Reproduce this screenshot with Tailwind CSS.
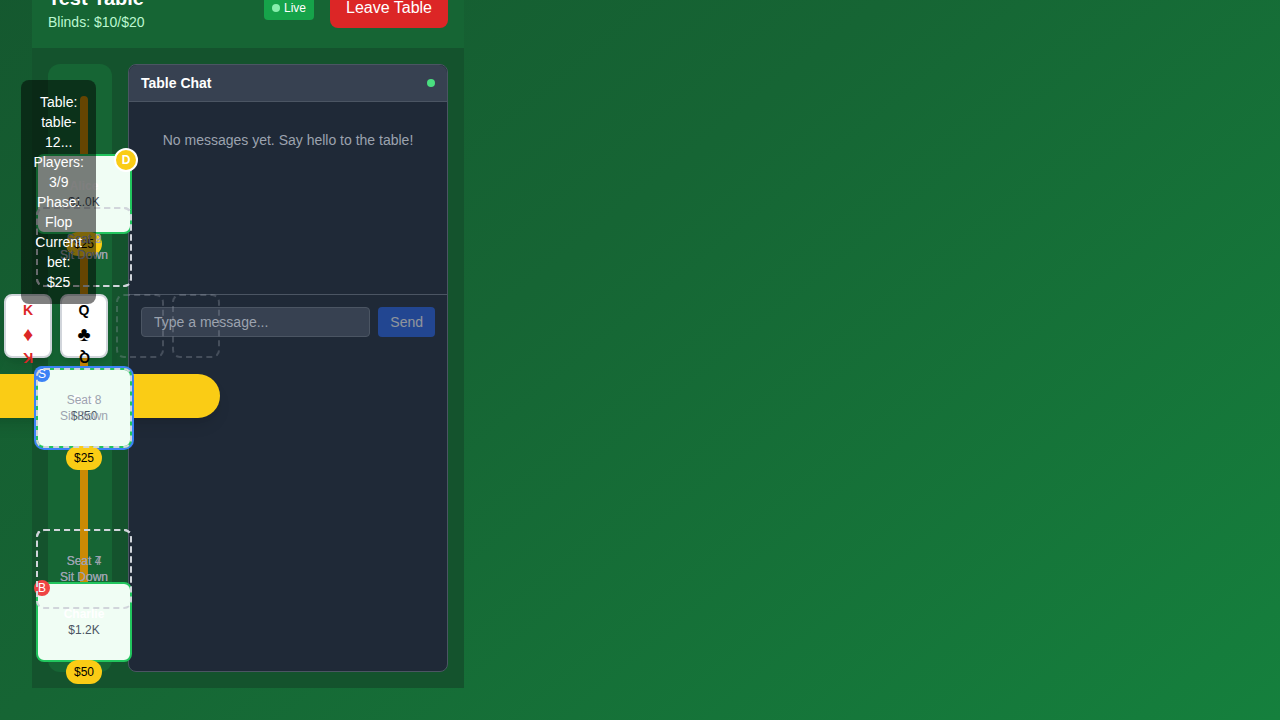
<!DOCTYPE html>
<html lang="en">
<head>
<meta charset="utf-8">
<meta name="viewport" content="width=device-width, initial-scale=1">
<title>Test Table</title>
<script src="https://cdn.jsdelivr.net/npm/@tailwindcss/browser@4"></script>
</head>
<body class="h-screen overflow-hidden font-['Liberation_Sans',Arial,sans-serif]">
<div class="h-full overflow-hidden">
<div class="-mt-80 px-8 pt-72 pb-8 [background-image:linear-gradient(to_bottom_right,#14532d,#166534,#15803d)]">
  <div class="w-fit bg-[#14532d]">
    <header class="flex items-center justify-between bg-[#166534] p-4">
      <div>
        <h1 class="text-xl font-bold text-white">Test Table</h1>
        <p class="text-sm text-[#bbf7d0]">Blinds: $10/$20</p>
      </div>
      <div class="flex items-center gap-4">
        <div class="flex items-center gap-1 rounded bg-[#16a34a] px-2 py-1 text-xs text-white">
          <span class="size-2 rounded-full bg-[#86efac]"></span>
          <span>Live</span>
        </div>
        <button type="button" class="rounded-lg bg-[#dc2626] px-4 py-2 text-white">Leave Table</button>
      </div>
    </header>

    <main class="flex gap-4 p-4">
      <section aria-label="Poker table" class="relative z-10 min-h-[608px] w-16 rounded-xl bg-[#166534]">
        <div class="absolute inset-8 rounded-full border-4 border-[#ca8a04]">

          <!-- Community cards and pot -->
          <div class="absolute top-1/2 left-1/2 flex w-[272px] -translate-x-1/2 -translate-y-1/2 flex-col gap-4 pb-6">
            <div class="flex gap-2">
              <div class="h-16 w-12 rounded-lg border-2 border-[#d1d5db] bg-white shadow-lg"></div>
              <div class="flex h-16 w-12 flex-col items-center rounded-lg border-2 border-[#d1d5db] bg-white p-1 font-bold text-[#dc2626] shadow-lg">
                <span class="text-sm">K</span>
                <span class="text-xl">♦</span>
                <span class="rotate-180 text-sm">K</span>
              </div>
              <div class="flex h-16 w-12 flex-col items-center rounded-lg border-2 border-[#d1d5db] bg-white p-1 font-bold text-black shadow-lg">
                <span class="text-sm">Q</span>
                <span class="text-xl">♣</span>
                <span class="rotate-180 text-sm">Q</span>
              </div>
              <div class="h-16 w-12 rounded-lg border-2 border-dashed border-[#9ca3af] opacity-30"></div>
              <div class="h-16 w-12 rounded-lg border-2 border-dashed border-[#9ca3af] opacity-30"></div>
            </div>
            <div class="h-11 rounded-full bg-[#facc15] shadow-lg"></div>
          </div>

          <!-- Seats -->
          <div class="absolute top-[94px] left-1/2 flex h-20 w-24 -translate-x-1/2 -translate-y-1/2 flex-col items-center justify-center rounded-lg border-2 border-[#22c55e] bg-[#f0fdf4] text-xs">
            <div class="font-bold text-white">Alice</div>
            <div class="text-[#4b5563]">$1.0K</div>
            <div class="absolute -top-2 -right-2 flex size-6 items-center justify-center rounded-full border-2 border-white bg-[#facc15] font-bold text-white">D</div>
            <div class="absolute -bottom-6 rounded-full bg-[#facc15] px-2 py-1 text-black">$25</div>
          </div>
          <button type="button" class="absolute top-[147px] left-1/2 h-20 w-24 -translate-x-1/2 -translate-y-1/2 rounded-lg border-2 border-dashed border-[#d1d5db] text-xs text-[#9ca3af]">Seat 2<br>Sit Down</button>
          <div class="absolute top-[308px] left-1/2 flex h-20 w-24 -translate-x-1/2 -translate-y-1/2 flex-col items-center justify-center rounded-lg border-2 border-[#22c55e] bg-[#f0fdf4] text-xs ring-2 ring-[#3b82f6]">
            <div class="font-bold text-white">Bob</div>
            <div class="text-[#4b5563]">$850</div>
            <div class="absolute -top-1 -left-1 flex size-4 items-center justify-center rounded-full bg-[#3b82f6] text-white">S</div>
            <div class="absolute -bottom-6 rounded-full bg-[#facc15] px-2 py-1 text-black">$25</div>
          </div>
          <button type="button" class="absolute top-[469px] left-1/2 h-20 w-24 -translate-x-1/2 -translate-y-1/2 rounded-lg border-2 border-dashed border-[#d1d5db] text-xs text-[#9ca3af]">Seat 4<br>Sit Down</button>
          <div class="absolute top-[522px] left-1/2 flex h-20 w-24 -translate-x-1/2 -translate-y-1/2 flex-col items-center justify-center rounded-lg border-2 border-[#22c55e] bg-[#f0fdf4] text-xs">
            <div class="font-bold text-white">Charlie</div>
            <div class="text-[#4b5563]">$1.2K</div>
            <div class="absolute -top-1 -left-1 flex size-4 items-center justify-center rounded-full bg-[#ef4444] text-white">B</div>
            <div class="absolute -bottom-6 rounded-full bg-[#facc15] px-2 py-1 text-black">$50</div>
          </div>
          <button type="button" class="absolute top-[469px] left-1/2 h-20 w-24 -translate-x-1/2 -translate-y-1/2 rounded-lg border-2 border-dashed border-[#d1d5db] text-xs text-[#9ca3af]">Seat 7<br>Sit Down</button>
          <button type="button" class="absolute top-[308px] left-1/2 h-20 w-24 -translate-x-1/2 -translate-y-1/2 rounded-lg border-2 border-dashed border-[#d1d5db] text-xs text-[#9ca3af]">Seat 8<br>Sit Down</button>
          <button type="button" class="absolute top-[147px] left-1/2 h-20 w-24 -translate-x-1/2 -translate-y-1/2 rounded-lg border-2 border-dashed border-[#d1d5db] text-xs text-[#9ca3af]">Seat 9<br>Sit Down</button>
        </div>

        <!-- Table info -->
        <div class="absolute top-4 right-4 rounded-lg bg-black/50 p-3 text-center text-sm text-white">
          <div>Table: table-12...</div>
          <div>Players: 3/9</div>
          <div>Phase: Flop</div>
          <div>Current bet: $25</div>
        </div>
      </section>

      <aside class="flex w-80 flex-col rounded-lg border border-[#4b5563] bg-[#1f2937] text-sm">
        <div class="flex items-center justify-between rounded-t-lg border-b border-[#4b5563] bg-[#374151] px-3 py-2">
          <h2 class="font-bold text-white">Table Chat</h2>
          <span class="size-2 rounded-full bg-[#4ade80]"></span>
        </div>
        <div class="h-48 p-3">
          <p class="py-4 text-center text-[#9ca3af]">No messages yet. Say hello to the table!</p>
        </div>
        <form class="flex gap-2 border-t border-[#4b5563] p-3">
          <input type="text" aria-label="Message" placeholder="Type a message..." class="min-w-0 flex-1 rounded border border-[#4b5563] bg-[#374151] px-3 py-1 text-white placeholder:text-[#9ca3af]">
          <button type="submit" disabled class="rounded bg-[#2563eb] px-3 py-1 text-white opacity-50">Send</button>
        </form>
      </aside>
    </main>
  </div>
</div>
</div>
</body>
</html>
